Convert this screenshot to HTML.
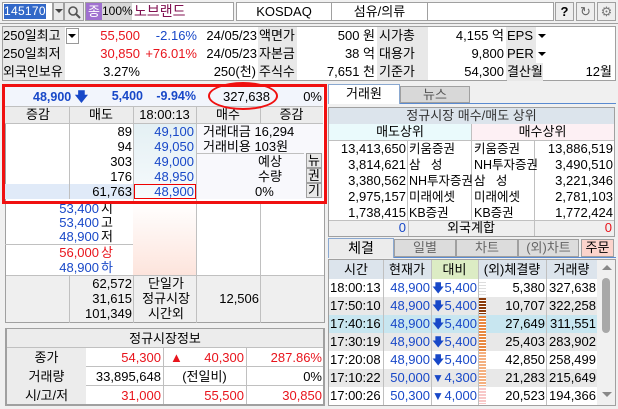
<!DOCTYPE html>
<html><head><meta charset="utf-8"><style>
*{margin:0;padding:0;box-sizing:border-box}
body{width:618px;height:409px;overflow:hidden;background:#f0f0f0;font-family:"Liberation Sans","Noto Sans CJK KR",sans-serif;font-size:13px;color:#000;position:relative}
div{position:absolute;white-space:nowrap}
.r{text-align:right}.c{text-align:center}
.b{color:#1848c8}.red{color:#e8141c}
.bx{border:1px solid #a0a0a0}
.g{background:#e8e8e8}
</style></head><body>
<!-- top bar -->
<div style="left:0;top:0;width:618px;height:24px;background:#f0f0f0;border-bottom:1px solid #a0a0a0"></div>
<div class="bx" style="left:2px;top:2px;width:51px;height:19px;background:#fff"></div>
<div style="left:4px;top:4px;width:42px;height:15px;background:#3268c8;color:#fff;line-height:15px;font-size:12px;letter-spacing:0.3px">145170</div>
<div class="bx" style="left:53px;top:2px;width:11px;height:19px;background:#e8e8e8"></div>
<div style="left:55px;top:9px;width:0;height:0;border-left:4px solid transparent;border-right:4px solid transparent;border-top:4px solid #444"></div>
<div class="bx" style="left:64px;top:2px;width:20px;height:19px;background:#e8e8e8"></div>
<svg style="position:absolute;left:67px;top:5px" width="14" height="14"><circle cx="6" cy="6" r="4" fill="none" stroke="#555" stroke-width="1.6"/><line x1="9" y1="9" x2="13" y2="13" stroke="#555" stroke-width="2"/></svg>
<div class="bx" style="left:85px;top:2px;width:149px;height:19px;background:#fff"></div>
<div style="left:86px;top:3px;width:16px;height:17px;background:#a070d0;color:#fff;line-height:17px;text-align:center">종</div>
<div style="left:102px;top:3px;width:30px;height:17px;background:#d8d8d8;line-height:17px;text-align:center;font-size:12px">100%</div>
<div style="left:134px;top:3px;line-height:17px;color:#801050;font-size:14px">노브랜드</div>
<div style="left:236px;top:2px;width:96px;height:19px;background:#fff;border:1px solid #a0a0a0;line-height:17px" class="c">KOSDAQ</div>
<div style="left:331px;top:2px;width:97px;height:19px;background:#fff;border:1px solid #a0a0a0;line-height:17px" class="c">섬유/의류</div>
<div style="left:427px;top:2px;width:127px;height:19px;background:#fff;border:1px solid #a0a0a0"></div>
<div class="bx c" style="left:555px;top:2px;width:19px;height:19px;background:#eee;font-weight:bold;line-height:17px">?</div>
<div class="bx c" style="left:576px;top:2px;width:19px;height:19px;background:#eee;color:#666;line-height:17px;font-size:13px">↻</div>
<div class="bx c" style="left:597px;top:2px;width:19px;height:19px;background:#eee;color:#777;line-height:17px;font-size:13px">⚙</div>
<!-- info table -->
<div style="left:2px;top:26px;width:614px;height:55px;background:#fff;border:1px solid #a0a0a0"></div>
<div class="g" style="left:3px;top:27px;width:62px;height:53px"></div>
<div class="g" style="left:258px;top:27px;width:39px;height:53px"></div>
<div class="g" style="left:377px;top:27px;width:51px;height:53px"></div>
<div class="g" style="left:506px;top:27px;width:30px;height:53px"></div>
<div style="left:3px;top:27px;line-height:18px">250일최고</div>
<div style="left:66px;top:28px;width:13px;height:16px;background:#fff;border:1px solid #999"></div>
<div style="left:68px;top:34px;border-left:4px solid transparent;border-right:4px solid transparent;border-top:4px solid #000;width:0;height:0"></div>
<div style="left:3px;top:45px;line-height:18px">250일최저</div>
<div style="left:3px;top:63px;line-height:18px">외국인보유</div>
<div class="r red" style="left:80px;width:60px;top:27px;line-height:18px">55,500</div>
<div class="r b" style="left:140px;width:57px;top:27px;line-height:18px">-2.16%</div>
<div class="r" style="left:197px;width:60px;top:27px;line-height:18px">24/05/23</div>
<div class="r red" style="left:80px;width:60px;top:45px;line-height:18px">30,850</div>
<div class="r red" style="left:140px;width:57px;top:45px;line-height:18px">+76.01%</div>
<div class="r" style="left:197px;width:60px;top:45px;line-height:18px">24/05/23</div>
<div class="r" style="left:80px;width:60px;top:63px;line-height:18px">3.27%</div>
<div class="r" style="left:140px;width:116px;top:63px;line-height:18px">250(천)</div>
<div style="left:259px;top:27px;line-height:18px">액면가</div>
<div style="left:259px;top:45px;line-height:18px">자본금</div>
<div style="left:259px;top:63px;line-height:18px">주식수</div>
<div class="r" style="left:297px;width:78px;top:27px;line-height:18px">500 원</div>
<div class="r" style="left:297px;width:78px;top:45px;line-height:18px">38 억</div>
<div class="r" style="left:297px;width:78px;top:63px;line-height:18px">7,651 천</div>
<div style="left:379px;top:27px;line-height:18px">시가총</div>
<div style="left:379px;top:45px;line-height:18px">대용가</div>
<div style="left:379px;top:63px;line-height:18px">기준가</div>
<div class="r" style="left:428px;width:76px;top:27px;line-height:18px">4,155 억</div>
<div class="r" style="left:428px;width:76px;top:45px;line-height:18px">9,800</div>
<div class="r" style="left:428px;width:76px;top:63px;line-height:18px">54,300</div>
<div style="left:507px;top:27px;line-height:18px">EPS</div>
<div style="left:507px;top:45px;line-height:18px">PER</div>
<div style="left:507px;top:63px;line-height:18px;background:#e8e8e8">결산월</div>
<div style="left:538px;top:34px;border-left:4px solid transparent;border-right:4px solid transparent;border-top:4px solid #000;width:0;height:0"></div>
<div style="left:538px;top:52px;border-left:4px solid transparent;border-right:4px solid transparent;border-top:4px solid #000;width:0;height:0"></div>
<div class="r" style="left:545px;width:67px;top:63px;line-height:18px">12월</div>
<!-- left order book -->
<div style="left:5px;top:86px;width:320px;height:320px;background:#fff;border:1px solid #a0a0a0"></div>
<div style="left:5px;top:87px;width:318px;height:19px;background:#f2f5fc"></div>
<div class="b" style="left:33px;top:87px;line-height:19px;font-weight:bold;font-size:12.5px">48,900 <span style="font-size:13px">🡇</span></div>
<div class="b r" style="left:100px;width:43px;top:87px;line-height:19px;font-weight:bold;font-size:12.5px">5,400</div>
<div class="b r" style="left:150px;width:46px;top:87px;line-height:19px;font-weight:bold;font-size:12.5px">-9.94%</div>
<div style="left:223px;top:87px;line-height:19px">327,638</div>
<div class="r" style="left:290px;width:32px;top:87px;line-height:19px">0%</div>
<div style="left:5px;top:106px;width:318px;height:18px;background:#ececec;border-top:1px solid #c0c0c0;border-bottom:1px solid #c0c0c0"></div>
<div class="c" style="left:7px;width:62px;top:106px;line-height:18px">증감</div>
<div class="c" style="left:69px;width:64px;top:106px;line-height:18px">매도</div>
<div class="c" style="left:133px;width:63px;top:106px;line-height:18px">18:00:13</div>
<div class="c" style="left:196px;width:64px;top:106px;line-height:18px">매수</div>
<div class="c" style="left:260px;width:63px;top:106px;line-height:18px">증감</div>
<div style="left:133px;top:124px;width:63px;height:75px;background:linear-gradient(#e4f0f4,#f6fafc)"></div>
<div style="left:5px;top:184px;width:128px;height:15px;background:#e0eaf8"></div>
<div style="left:196px;top:124px;width:127px;height:75px;background:#f8f8fc"></div>
<div style="left:69px;top:106px;width:1px;height:93px;background:#c0c0c0"></div>
<div style="left:133px;top:106px;width:1px;height:200px;background:#c0c0c0"></div>
<div style="left:196px;top:106px;width:1px;height:200px;background:#c0c0c0"></div>
<div style="left:260px;top:106px;width:1px;height:18px;background:#c0c0c0"></div>
<div class="r" style="left:69px;width:63px;top:124px;line-height:15px">89<br>94<br>303<br>176<br>61,763</div>
<div class="r b" style="left:133px;width:61px;top:124px;line-height:15px">49,100<br>49,050<br>49,000<br>48,950<br>48,900</div>
<div style="left:134px;top:184px;width:62px;height:15px;border:1px solid #e00;background:transparent"></div>
<div style="left:203px;top:124px;line-height:15px">거래대금 16,294<br>거래비용 103원</div>
<div style="left:196px;top:153px;width:108px;height:1px;background:#c0c0c0"></div>
<div class="c" style="left:230px;width:80px;top:154px;line-height:15px">예상<br>수량</div>
<div style="left:255px;top:184px;line-height:15px">0%</div>
<div class="bx c" style="left:306px;top:153px;width:16px;height:15px;background:#e8e8e8;line-height:13px">뉴</div>
<div class="bx c" style="left:306px;top:168px;width:16px;height:15px;background:#e8e8e8;line-height:13px">권</div>
<div class="bx c" style="left:306px;top:183px;width:16px;height:15px;background:#e8e8e8;line-height:13px">기</div>
<!-- lower book -->
<div style="left:133px;top:203px;width:63px;height:72px;background:linear-gradient(#fff,#fde4dc)"></div>
<div style="left:260px;top:203px;width:1px;height:72px;background:#c0c0c0"></div>
<div style="left:5px;top:244px;width:128px;height:1px;background:#c0c0c0"></div>
<div class="r b" style="left:7px;width:92px;top:202px;line-height:14px">53,400<br>53,400<br>48,900</div>
<div style="left:101px;top:202px;line-height:14px">시<br>고<br>저</div>
<div class="r" style="left:7px;width:92px;top:245px;line-height:15px"><span class="red">56,000</span><br><span class="b">48,900</span></div>
<div style="left:101px;top:245px;line-height:15px"><span class="red">상</span><br><span class="b">하</span></div>
<div style="left:6px;top:275px;width:318px;height:48px;background:#efefef;border-top:1px solid #c0c0c0;border-bottom:1px solid #a0a0a0"></div>
<div style="left:69px;top:275px;width:1px;height:48px;background:#c0c0c0"></div>
<div style="left:133px;top:275px;width:1px;height:48px;background:#c0c0c0"></div>
<div style="left:196px;top:275px;width:1px;height:48px;background:#c0c0c0"></div>
<div style="left:260px;top:275px;width:1px;height:48px;background:#c0c0c0"></div>
<div class="r" style="left:69px;width:63px;top:276px;line-height:15px">62,572<br>31,615<br>101,349</div>
<div class="c" style="left:133px;width:66px;top:276px;line-height:15px">단일가<br>정규시장<br>시간외</div>
<div class="r" style="left:196px;width:63px;top:291px;line-height:15px">12,506</div>
<div style="left:5px;top:323px;width:320px;height:5px;background:#f0f0f0"></div>
<!-- 정규시장정보 -->
<div style="left:6px;top:328px;width:318px;height:77px;background:#fff;border:1px solid #a0a0a0"></div>
<div class="c" style="left:7px;width:316px;top:329px;height:19px;line-height:19px;background:#ececec;border-bottom:1px solid #c0c0c0">정규시장정보</div>
<div style="left:7px;top:348px;width:79px;height:56px;background:#ececec"></div>
<div style="left:86px;top:366px;width:237px;height:1px;background:#c0c0c0"></div>
<div style="left:86px;top:385px;width:237px;height:1px;background:#c0c0c0"></div>
<div style="left:163px;top:348px;width:1px;height:56px;background:#c0c0c0"></div>
<div style="left:246px;top:348px;width:1px;height:56px;background:#c0c0c0"></div>
<div class="c" style="left:7px;width:79px;top:348px;line-height:19px">종가<br>거래량<br>시/고/저</div>
<div class="r" style="left:86px;width:75px;top:348px;line-height:19px"><span class="red">54,300</span><br>33,895,648<br><span class="red">31,000</span></div>
<div class="red" style="left:170px;top:348px;line-height:19px">▲</div>
<div class="r" style="left:163px;width:81px;top:348px;line-height:19px"><span class="red">40,300</span><br><br><span class="red">55,500</span></div>
<div class="c" style="left:163px;width:83px;top:367px;line-height:19px">(전일비)</div>
<div class="r" style="left:246px;width:76px;top:348px;line-height:19px"><span class="red">287.86%</span><br>0%<br><span class="red">30,850</span></div>
<!-- red box + ellipse -->
<div style="left:2px;top:84px;width:325px;height:120px;border:3px solid #f01010"></div>
<div style="left:208px;top:82px;width:70px;height:28px;border:2px solid #f01010;border-radius:50%"></div>
<!-- right panel -->
<div style="left:328px;top:84px;width:72px;height:20px;background:#fff;border:1px solid #8aa8d0;border-bottom:none;line-height:18px" class="c">거래원</div>
<div style="left:400px;top:86px;width:70px;height:17px;background:#d8d8d8;border:1px solid #a0a0a0;line-height:15px;color:#555" class="c">뉴스</div>
<div style="left:400px;top:103px;width:216px;height:1px;background:#5a8ad0"></div>
<div style="left:328px;top:107px;width:287px;height:130px;background:#fff;border:1px solid #a0a0a0"></div>
<div class="c" style="left:329px;width:285px;top:108px;height:16px;line-height:16px;background:#dce4ec;color:#333">정규시장 매수/매도 상위</div>
<div class="c" style="left:329px;width:142px;top:124px;height:16px;line-height:16px;background:#eafafc">매도상위</div>
<div class="c" style="left:471px;width:143px;top:124px;height:16px;line-height:16px;background:#fdf0f4">매수상위</div>
<div style="left:329px;top:140px;width:285px;height:1px;background:#c0c0c0"></div>
<div style="left:407px;top:140px;width:1px;height:80px;background:#c0c0c0"></div>
<div style="left:471px;top:124px;width:1px;height:96px;background:#c0c0c0"></div>
<div style="left:534px;top:140px;width:1px;height:80px;background:#c0c0c0"></div>
<div class="r" style="left:329px;width:77px;top:141px;line-height:16px">13,413,650<br>3,814,621<br>3,380,562<br>2,975,157<br>1,738,415</div>
<div style="left:409px;top:141px;line-height:16px;font-size:12.5px">키움증권<br>삼&nbsp;&nbsp;&nbsp;성<br>NH투자증권<br>미래에셋<br>KB증권</div>
<div style="left:474px;top:141px;line-height:16px;font-size:12.5px">키움증권<br>NH투자증권<br>삼&nbsp;&nbsp;&nbsp;성<br>미래에셋<br>KB증권</div>
<div class="r" style="left:535px;width:78px;top:141px;line-height:16px">13,886,519<br>3,490,510<br>3,221,346<br>2,781,103<br>1,772,424</div>
<div style="left:329px;top:220px;width:285px;height:16px;background:#efefef;border-top:1px solid #c0c0c0"></div>
<div class="r b" style="left:329px;width:77px;top:220px;line-height:16px">0</div>
<div class="c" style="left:408px;width:126px;top:220px;line-height:16px">외국계합</div>
<div style="left:408px;top:220px;width:1px;height:16px;background:#c0c0c0"></div>
<div style="left:534px;top:220px;width:1px;height:16px;background:#c0c0c0"></div>
<div class="r red" style="left:535px;width:77px;top:220px;line-height:16px">0</div>
<!-- tabs 2 -->
<div class="c" style="left:328px;top:238px;width:66px;height:20px;background:#ececec;border:1px solid #8aa8d0;border-bottom:none;line-height:18px;font-size:14px">체결</div>
<div class="c" style="left:394px;top:239px;width:62px;height:18px;background:#dcdcdc;border:1px solid #a0a0a0;line-height:16px;color:#666">일별</div>
<div class="c" style="left:456px;top:239px;width:62px;height:18px;background:#dcdcdc;border:1px solid #a0a0a0;line-height:16px;color:#666">차트</div>
<div class="c" style="left:518px;top:239px;width:61px;height:18px;background:#dcdcdc;border:1px solid #a0a0a0;line-height:16px;color:#666">(외)차트</div>
<div class="c" style="left:581px;top:239px;width:33px;height:18px;background:#fcd4cc;border:1px solid #a0a0a0;line-height:16px">주문</div>
<div style="left:394px;top:257px;width:222px;height:1px;background:#5a8ad0"></div>
<!-- trade table -->
<div style="left:328px;top:259px;width:288px;height:147px;background:#fff;border:1px solid #a0a0a0"></div>
<div style="left:329px;top:260px;width:268px;height:19px;background:#dce4ec"></div>
<div style="left:431px;top:260px;width:47px;height:19px;background:#dcecc4"></div>
<div class="c" style="left:329px;width:54px;top:260px;line-height:19px">시간</div>
<div class="c" style="left:383px;width:48px;top:260px;line-height:19px">현재가</div>
<div class="c" style="left:431px;width:47px;top:260px;line-height:19px">대비</div>
<div class="c" style="left:478px;width:68px;top:260px;line-height:19px">(외)체결량</div>
<div class="c" style="left:546px;width:51px;top:260px;line-height:19px">거래량</div>
<div style="left:329px;top:297px;width:268px;height:18px;background:#e8e8e8"></div>
<div style="left:329px;top:315px;width:268px;height:18px;background:#c8e6f0"></div>
<div style="left:329px;top:333px;width:268px;height:18px;background:#e8e8e8"></div>
<div style="left:329px;top:369px;width:268px;height:18px;background:#e8e8e8"></div>
<div style="left:383px;top:260px;width:1px;height:145px;background:#c0c0c0"></div>
<div style="left:431px;top:260px;width:1px;height:145px;background:#c0c0c0"></div>
<div style="left:478px;top:260px;width:1px;height:145px;background:#c0c0c0"></div>
<div style="left:546px;top:260px;width:1px;height:145px;background:#c0c0c0"></div>
<div style="left:479px;top:280px;width:7px;height:16px;background:repeating-linear-gradient(#fff 0 2px,#ddd 2px 3px)"></div>
<div style="left:479px;top:298px;width:7px;height:16px;background:repeating-linear-gradient(#8a3a0a 0 2px,#fff 2px 3px)"></div>
<div style="left:479px;top:316px;width:7px;height:70px;background:repeating-linear-gradient(#e88840 0 2px,#fff 2px 3px)"></div>
<div style="left:479px;top:352px;width:7px;height:34px;background:repeating-linear-gradient(#f4b080 0 2px,#fff 2px 3px)"></div>
<div style="left:479px;top:388px;width:7px;height:16px;background:repeating-linear-gradient(#f8c8c8 0 2px,#fff 2px 3px)"></div>
<div style="left:330px;top:279px;line-height:18px">18:00:13<br>17:50:10<br>17:40:16<br>17:30:19<br>17:20:08<br>17:10:22<br>17:00:26</div>
<div class="r b" style="left:383px;width:47px;top:279px;line-height:18px">48,900<br>48,900<br>48,900<br>48,900<br>48,900<br>50,000<br>50,300</div>
<div class="b" style="left:432px;top:279px;line-height:18px;font-size:12px">🡇<br>🡇<br>🡇<br>🡇<br>🡇<br>▼<br>▼</div>
<div class="r b" style="left:440px;width:37px;top:279px;line-height:18px">5,400<br>5,400<br>5,400<br>5,400<br>5,400<br>4,300<br>4,000</div>
<div class="r" style="left:478px;width:67px;top:279px;line-height:18px">5,380<br>10,707<br>27,649<br>25,403<br>42,850<br>21,283<br>20,523</div>
<div class="r" style="left:546px;width:50px;top:279px;line-height:18px">327,638<br>322,258<br>311,551<br>283,902<br>258,499<br>215,649<br>194,366</div>
<div style="left:597px;top:260px;width:18px;height:145px;background:#f0f0f0"></div>
<div style="left:602px;top:265px;border-left:5px solid transparent;border-right:5px solid transparent;border-bottom:5px solid #888;width:0;height:0"></div>
<div style="left:602px;top:392px;border-left:5px solid transparent;border-right:5px solid transparent;border-top:5px solid #888;width:0;height:0"></div>
<div style="left:602px;top:278px;width:8px;height:55px;background:#a8a8a8;border-radius:4px"></div>
</body></html>
